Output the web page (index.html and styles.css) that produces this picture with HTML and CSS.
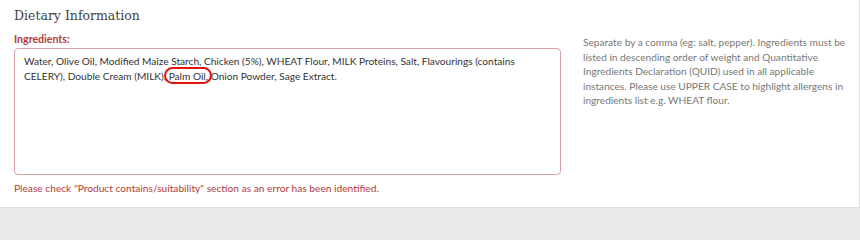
FILE: index.html
```html
<!DOCTYPE html>
<html lang="en">
<head>
<meta charset="utf-8">
<title>Dietary Information</title>
<link rel="stylesheet" href="styles.css">
</head>
<body>
<section class="card">
  <h2 class="card-title">Dietary Information</h2>
  <div class="field-row">
    <div class="field-main">
      <label class="field-label" for="ingredients">Ingredients:</label>
      <div class="field-input" id="ingredients">Water, Olive Oil, Modified Maize Starch, Chicken (5%), WHEAT Flour, MILK Proteins, Salt, Flavourings (contains CELERY), Double Cream (MILK), <span class="mark">Palm Oil</span>, Onion Powder, Sage Extract.</div>
      <p class="field-error">Please check "Product contains/suitability" section as an error has been identified.</p>
    </div>
    <p class="field-help">Separate by a comma (eg: salt, pepper). Ingredients must be listed in descending order of weight and Quantitative Ingredients Declaration (QUID) used in all applicable instances. Please use UPPER CASE to highlight allergens in ingredients list e.g. WHEAT flour.</p>
  </div>
</section>
</body>
</html>
```
FILE: styles.css
```css
html, body {
  margin: 0;
  padding: 0;
}
body {
  background: #e9e9e9;
  font-family: Lato, "Open Sans", sans-serif;
}
.card {
  box-sizing: border-box;
  width: 860px;
  height: 208px;
  background: #fff;
  border-right: 1px solid #dcdcdc;
  border-bottom: 1px solid #dcdcdc;
  padding: 7px 0 0 14px;
}
.card-title {
  margin: 0;
  font-family: "DejaVu Serif", "Liberation Serif", serif;
  font-weight: normal;
  font-size: 12.5px;
  line-height: 18px;
  color: #444;
}
.field-row {
  display: flex;
  gap: 22px;
  margin-top: 6px;
}
.field-main {
  width: 547px;
  flex: none;
}
.field-label {
  display: block;
  font-size: 10.6px;
  font-weight: bold;
  line-height: 16px;
  color: #b33c3c;
}
.field-input {
  box-sizing: border-box;
  height: 127px;
  margin-top: 1px;
  border: 1px solid #d9a3a3;
  border-radius: 4px;
  padding: 5px 9px;
  font-size: 10.15px;
  line-height: 15px;
  color: #333;
}
.mark {
  position: relative;
}
.mark::after {
  content: "";
  position: absolute;
  left: -5px;
  right: -6px;
  top: -3px;
  bottom: -2px;
  border: 2.7px solid #e3140f;
  border-radius: 9px;
}
.field-error {
  margin: 6px 0 0;
  font-size: 10.2px;
  line-height: 14px;
  color: #b33c3c;
}
.field-help {
  margin: 4px 0 0;
  width: 268px;
  font-size: 10.15px;
  line-height: 14.6px;
  color: #777;
}
```
